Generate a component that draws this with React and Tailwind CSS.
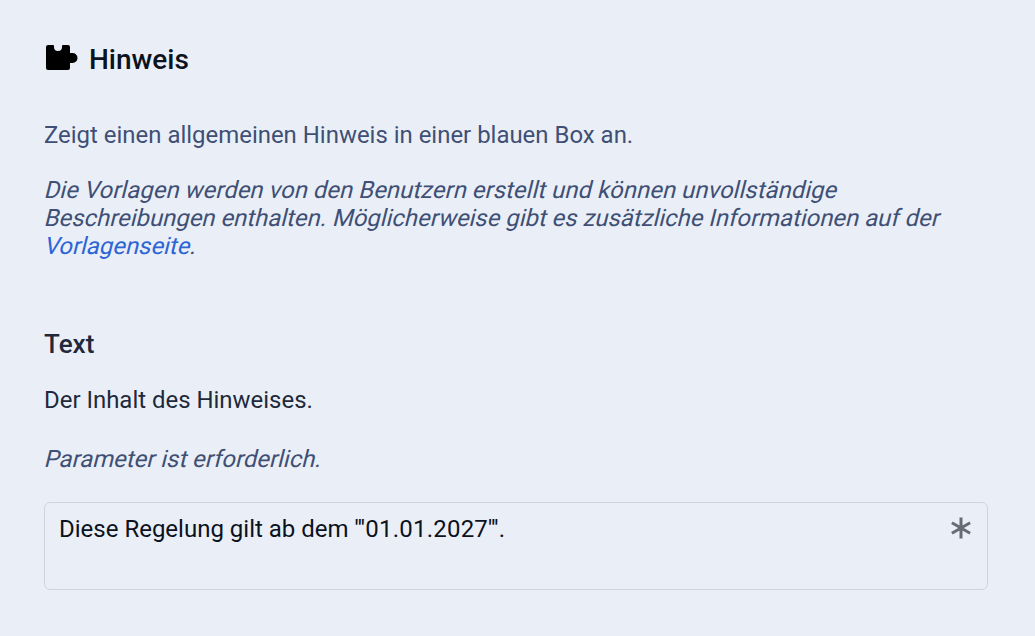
function Oblique({ children }) {
  return <span className="block origin-[0_70%] -skew-x-[14deg] text-[23.88px]">{children}</span>;
}

export default function App() {
  return (
    <div className="min-h-[636px] bg-[#eaeff7] px-[44px] pt-[38px] font-['Roboto',sans-serif]">
      <div className="flex h-[42px] items-center gap-[9px]">
        <svg width="36" height="28" viewBox="44 44 36 28" className="-mt-[2px] text-black">
          <path fill="currentColor" d="M48 45h5a1 1 0 0 1 1 1v1a4 4 0 0 0 8 0v-1a1 1 0 0 1 1-1h5a2 2 0 0 1 2 2v6h2.500a5 5 0 0 1 0 10H70v5a2 2 0 0 1-2 2H48a2 2 0 0 1-2-2V47a2 2 0 0 1 2-2z" />
        </svg>
        <h1 className="mt-[2px] text-[28px] font-medium text-[#0b1220]">Hinweis</h1>
      </div>
      <p className="mt-[41px] text-[23.95px] leading-[28px] text-[#3f4f75]">Zeigt einen allgemeinen Hinweis in einer blauen Box an.</p>
      <div className="mt-[27px] text-[24px] leading-[28px] text-[#3f4f75]">
        <Oblique><span className="tracking-[0.04px]">Die Vorlagen werden von den Benutzern erstellt und können unvollständige</span></Oblique>
        <Oblique>Beschreibungen enthalten. Möglicherweise gibt es zusätzliche Informationen auf der</Oblique>
        <Oblique><span className="text-[#2d64d6]">Vorlagenseite</span>.</Oblique>
      </div>
      <h2 className="mt-[68px] text-[26px] leading-[32px] font-medium text-[#1e293b]">Text</h2>
      <p className="mt-[26px] text-[23.95px] leading-[28px] text-[#1e293b]">Der Inhalt des Hinweises.</p>
      <div className="mt-[31px] text-[24px] leading-[28px] text-[#3f4f75]">
        <Oblique>Parameter ist erforderlich.</Oblique>
      </div>
      <div className="relative mt-[29px] h-[88px] w-[944px] rounded-[6px] border border-[#d1d5db] px-[14px] py-[12px] text-[24px] leading-[28px] text-[#0b1220]">
        Diese Regelung gilt ab dem <span className="tracking-[0.22px]">'''01.01.2027'''.</span>
        <svg width="24" height="24" viewBox="0 0 24 24" className="absolute right-[14px] top-[13px] text-[#666c75]" stroke="currentColor" strokeWidth="3" fill="none">
          <path d="M12 1.500v21M2.900 6.750l18.200 10.500M21.100 6.750l-18.200 10.500" />
        </svg>
      </div>
    </div>
  );
}
